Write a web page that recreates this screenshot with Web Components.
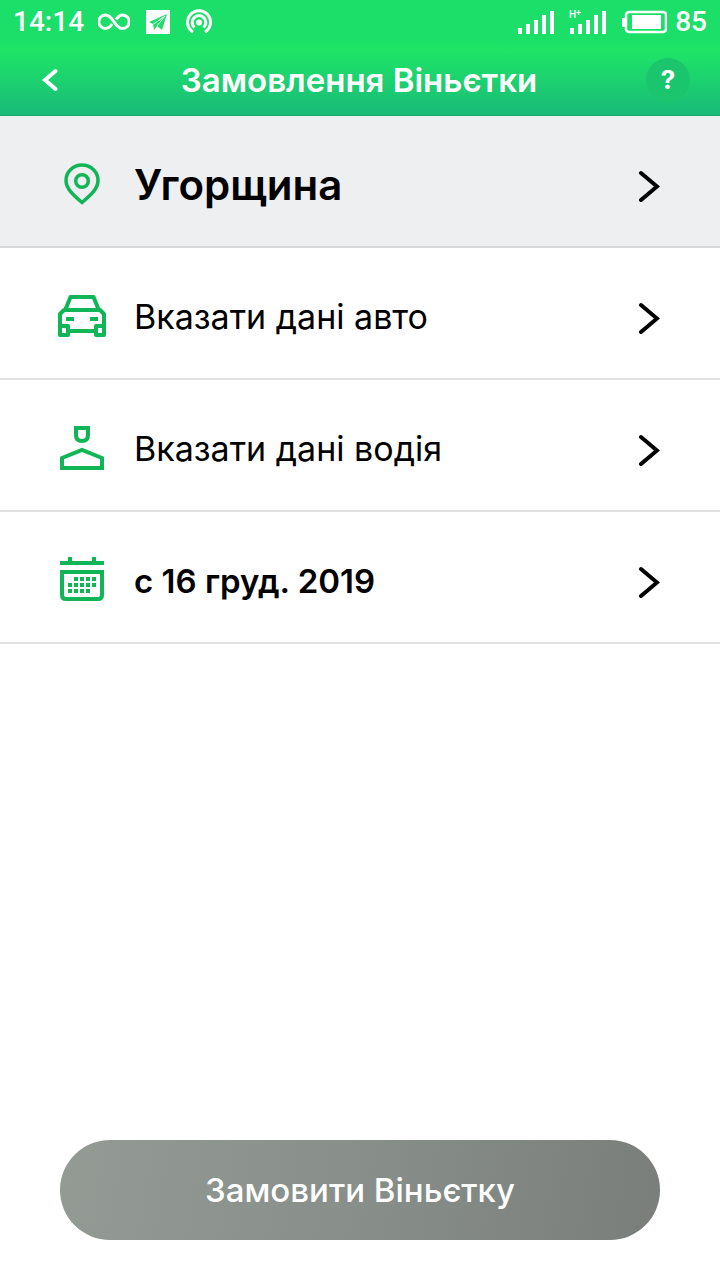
<!DOCTYPE html>
<html lang="uk">
<head>
<meta charset="utf-8">
<meta name="viewport" content="width=device-width, initial-scale=1">
<title>Замовлення Віньєтки</title>
<style>
html, body { height: 100%; }
body { margin: 0; background: #fff; color: #000; font-family: Inter, "Noto Sans", sans-serif; }
</style>
</head>
<body>
<vignette-order></vignette-order>

<template id="status-tpl">
<style>
:host { display: flex; align-items: center; height: 44px; padding: 0 13px; color: #fff; font: 500 28px/44px Roboto, sans-serif; }
svg { display: block; flex: none; }
.left, .right { display: flex; align-items: center; }
.left { gap: 14px; }
.right { margin-left: auto; gap: 14px; }
.battery { display: flex; align-items: center; gap: 8px; }
</style>
<div class="left">
  <span>14:14</span>
  <svg width="32" height="24" viewBox="0 0 32 24" fill="none" stroke="#fff" stroke-width="3"><path d="M18 9.500C20 6.500 22 5 24.500 5a6.600 6.600 0 0 1 0 13.500c-3 0-5-1.500-8.500-6.700C12.500 6.500 10.500 5 7.500 5a6.600 6.600 0 0 0 0 13.500c2.500 0 4.500-1.500 6.500-4.500"/></svg>
  <svg width="28" height="24" viewBox="0 0 28 24"><path fill="#fff" d="M2 0h24v24H2z"/><path fill="#1bdf68" d="M5 12 23 4l-5 16-5-4-3 4-1-6z"/><path fill="none" stroke="#fff" d="M9.500 14 21 6l-8 10"/></svg>
  <svg width="28" height="28" viewBox="0 0 28 28" fill="none" stroke="#fff" stroke-width="3"><path d="M7 24a11.500 11.500 0 1 1 12 0M8.500 19.500a6.800 6.800 0 1 1 9 0"/><circle cx="13" cy="14.500" r="3" fill="#fff" stroke="none"/><path d="m13 19-4 6h8z" fill="#1bdf68" stroke="none"/></svg>
</div>
<div class="right">
  <svg width="38" height="26" viewBox="0 0 38 26" fill="#fff"><path d="M1 19h4v6H1zM9 15h4v10H9zM17 11h4v14h-4zM25 6h4v19h-4zM33 2h4v23h-4z"/></svg>
  <svg width="38" height="26" viewBox="0 0 38 26" fill="#fff"><path d="M1 19h4v6H1zM9 15h4v10H9zM17 11h4v14h-4zM25 6h4v19h-4zM33 2h4v23h-4z"/><text x="0" y="9" font-family="Roboto" font-size="10">H<tspan dy="-2" font-size="9">+</tspan></text></svg>
  <div class="battery">
    <svg width="46" height="24" viewBox="0 0 46 24"><rect x="5" y="2" width="40" height="20" rx="3" fill="none" stroke="#fff" stroke-width="2.500"/><path fill="#fff" d="M11 5h29v14H11zM1 8h4v9H1z"/></svg>
    <span>85</span>
  </div>
</div>
</template>

<template id="header-tpl">
<style>
:host { display: block; background: linear-gradient(#1bdf68 0, #1bdf68 38px, #1ee567 50px, #1abb78 114px, #16a86c 116px); }
.bar { display: grid; grid-template-columns: 44px 1fr 44px; align-items: center; height: 72px; padding: 0 30px 0 28px; color: #fff; }
h1 { margin: 0; text-align: center; font-size: 33px; line-height: 40px; font-weight: 600; }
button { width: 44px; height: 44px; border: 0; padding: 0; background: none; color: #fff; font: 700 26px/44px Inter, sans-serif; border-radius: 50%; }
.help { background: #1bc56d; }
svg { display: block; margin: auto; }
</style>
<status-bar></status-bar>
<div class="bar">
  <button aria-label="Назад"><svg width="20" height="28" viewBox="0 0 20 28" fill="none" stroke="#fff" stroke-width="4" stroke-linecap="round"><path d="M15.500 5 5 14l10.500 9"/></svg></button>
  <h1><slot></slot></h1>
  <button class="help" aria-label="Довідка">?</button>
</div>
</template>

<template id="row-tpl">
<style>
:host { display: block; }
button { box-sizing: border-box; display: flex; align-items: center; width: 100%; height: 132px; padding: 8px 60px 0 58px; border: 0; border-bottom: 2px solid #dfe1e1; background: #fff; color: #000; font: 400 34px/40px Inter, "Noto Sans", sans-serif; text-align: left; }
:host([strong]) button { font-size: 33px; font-weight: 600; }
:host([country]) button { background: #eeeff1; border-color: #d5d8d9; font-size: 42px; font-weight: 600; }
.icon { display: flex; flex: none; width: 48px; margin-right: 28px; }
.label { flex: 1; }
.chevron { flex: none; display: block; }
</style>
<button>
  <span class="icon"><slot name="icon"></slot></span>
  <span class="label"><slot></slot></span>
  <svg class="chevron" width="22" height="34" viewBox="0 0 22 34" fill="none" stroke="#000" stroke-width="4" stroke-linecap="round"><path d="M3 5 19 18.500 3 32"/></svg>
</button>
</template>

<template id="action-tpl">
<style>
:host { display: block; }
button { display: block; width: 100%; height: 100px; padding: 0; border: 0; border-radius: 50px; background: linear-gradient(100deg, #949a94, #888e89 50%, #797e7b); color: #fff; font: 500 33px/100px Inter, "Noto Sans", sans-serif; }
</style>
<button><slot></slot></button>
</template>

<template id="order-tpl">
<style>
:host { display: flex; flex-direction: column; min-height: 100vh; }
svg { display: block; }
main { flex: 1; }
footer { padding: 40px 60px; }
</style>
<app-header>Замовлення Віньєтки</app-header>
<main>
  <option-row country><svg slot="icon" width="48" height="48" viewBox="0 0 48 48" fill="none" stroke="#0fb557" stroke-width="3.500"><path d="M24 41.500C15 34 8 27.500 8 19.500a16 15.500 0 0 1 32 0C40 27.500 33 34 24 41.500z"/><circle cx="24" cy="20" r="6.300"/></svg>Угорщина</option-row>
  <option-row><svg slot="icon" width="48" height="48" viewBox="0 0 48 48" fill="none" stroke="#0fb557" stroke-width="4" stroke-linejoin="round"><path d="M7 17.500 12.500 4h23L41 17.500M10 38v4H2V21l4-4h36l4 4v21h-8v-4M2 33h8v5h28v-5h8M10 33v9M38 33v9M8 26h8M32 26h8"/></svg>Вказати дані авто</option-row>
  <option-row><svg slot="icon" width="48" height="48" viewBox="0 0 48 48" fill="none" stroke="#0fb557" stroke-width="4"><path d="M18 3h12v7c0 4-2 6-6 6s-6-2-6-6zM4 43V33l20-8 20 8v10z"/></svg>Вказати дані водія</option-row>
  <option-row strong><svg slot="icon" width="48" height="48" viewBox="0 0 48 48" fill="none" stroke="#0fb557" stroke-width="4"><path d="M2 6h44M12 0v5M36 0v5M4 15h40v23q0 4-4 4H8q-4 0-4-4z"/><path stroke-dasharray="4 2" d="M16 22h22M10 28h28M10 34h22"/></svg>с 16 груд. 2019</option-row>
</main>
<footer><action-button>Замовити Віньєтку</action-button></footer>
</template>

<script>
for (const [tag, id] of [
  ["status-bar", "status-tpl"],
  ["app-header", "header-tpl"],
  ["option-row", "row-tpl"],
  ["action-button", "action-tpl"],
  ["vignette-order", "order-tpl"]
]) {
  customElements.define(tag, class extends HTMLElement {
    constructor() {
      super();
      this.attachShadow({ mode: "open" }).append(document.getElementById(id).content.cloneNode(true));
    }
  });
}
</script>
</body>
</html>
